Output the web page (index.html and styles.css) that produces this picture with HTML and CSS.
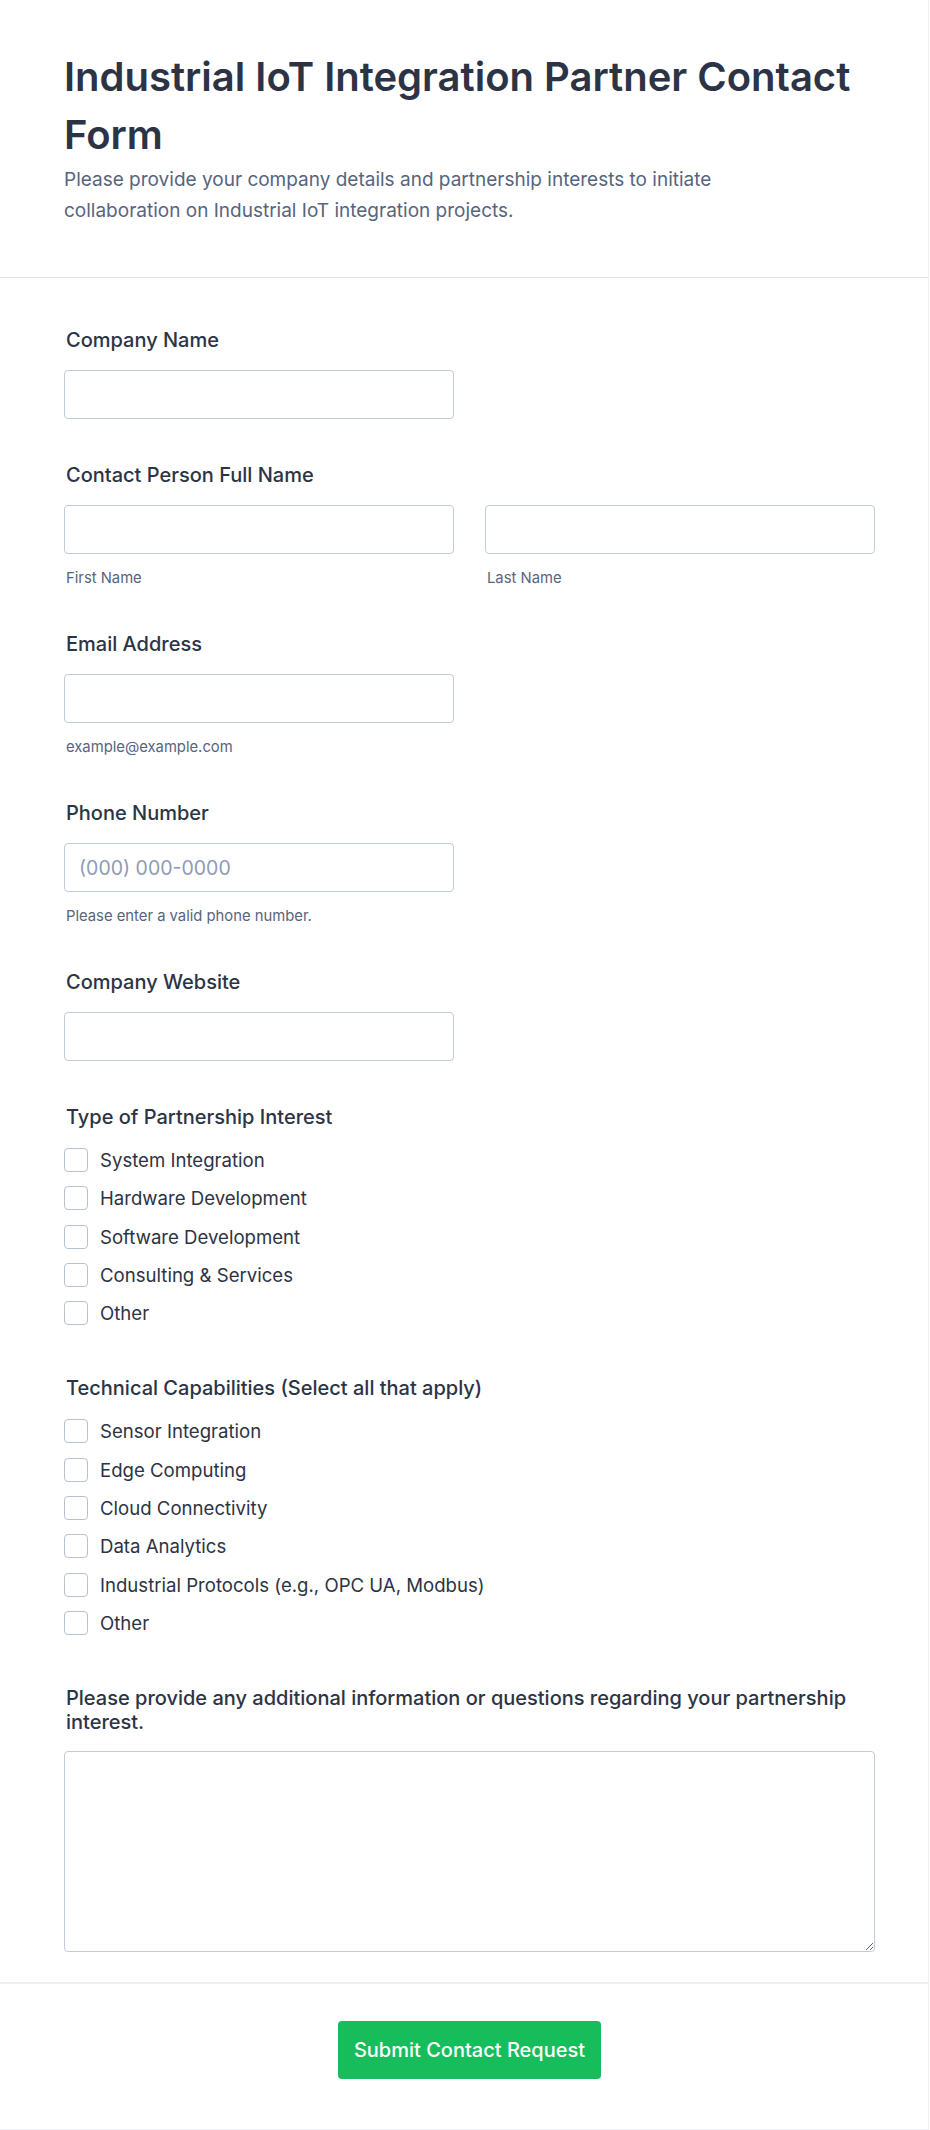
FILE: index.html
```html
<!DOCTYPE html>
<html lang="en">
<head>
<meta charset="utf-8">
<title>Industrial IoT Integration Partner Contact Form</title>
<link rel="stylesheet" href="styles.css">
</head>
<body>
<div class="page">
  <header class="form-header">
    <h1 class="form-title">Industrial IoT Integration Partner Contact Form</h1>
    <p class="form-subtitle">Please provide your company details and partnership interests to initiate collaboration on Industrial IoT integration projects.</p>
  </header>

  <form class="form-body">
    <div class="field">
      <label class="field-label">Company Name</label>
      <div class="cols">
        <input class="input" type="text">
      </div>
    </div>

    <div class="field">
      <label class="field-label">Contact Person Full Name</label>
      <div class="cols">
        <div class="col">
          <input class="input" type="text">
          <span class="sublabel">First Name</span>
        </div>
        <div class="col">
          <input class="input" type="text">
          <span class="sublabel">Last Name</span>
        </div>
      </div>
    </div>

    <div class="field">
      <label class="field-label">Email Address</label>
      <div class="cols">
        <div class="col">
          <input class="input" type="email">
          <span class="sublabel">example@example.com</span>
        </div>
      </div>
    </div>

    <div class="field">
      <label class="field-label">Phone Number</label>
      <div class="cols">
        <div class="col">
          <input class="input" type="tel" placeholder="(000) 000-0000">
          <span class="sublabel">Please enter a valid phone number.</span>
        </div>
      </div>
    </div>

    <div class="field">
      <label class="field-label">Company Website</label>
      <div class="cols">
        <input class="input" type="url">
      </div>
    </div>

    <div class="field field-checks">
      <div class="field-label">Type of Partnership Interest</div>
      <div class="check-list">
        <label class="check"><input class="box" type="checkbox"><span>System Integration</span></label>
        <label class="check"><input class="box" type="checkbox"><span>Hardware Development</span></label>
        <label class="check"><input class="box" type="checkbox"><span>Software Development</span></label>
        <label class="check"><input class="box" type="checkbox"><span>Consulting &amp; Services</span></label>
        <label class="check"><input class="box" type="checkbox"><span>Other</span></label>
      </div>
    </div>

    <div class="field field-checks">
      <div class="field-label">Technical Capabilities (Select all that apply)</div>
      <div class="check-list">
        <label class="check"><input class="box" type="checkbox"><span>Sensor Integration</span></label>
        <label class="check"><input class="box" type="checkbox"><span>Edge Computing</span></label>
        <label class="check"><input class="box" type="checkbox"><span>Cloud Connectivity</span></label>
        <label class="check"><input class="box" type="checkbox"><span>Data Analytics</span></label>
        <label class="check"><input class="box" type="checkbox"><span>Industrial Protocols (e.g., OPC UA, Modbus)</span></label>
        <label class="check"><input class="box" type="checkbox"><span>Other</span></label>
      </div>
    </div>

    <div class="field field-last">
      <label class="field-label">Please provide any additional information or questions regarding your partnership interest.</label>
      <textarea class="textarea"></textarea>
    </div>
  </form>

  <div class="form-footer">
    <button class="submit" type="button">Submit Contact Request</button>
  </div>
</div>
</body>
</html>
```

FILE: styles.css
```css
* {
  box-sizing: border-box;
}

html, body {
  margin: 0;
  padding: 0;
  background: #ffffff;
}

body {
  font-family: Inter, "Noto Sans", "Liberation Sans", sans-serif;
  color: #2c3345;
}

.page {
  width: 929px;
  min-height: 2129px;
  background: #ffffff;
  border-right: 1px solid #eef0f5;
  border-bottom: 1px solid #eef0f5;
}

.form-header {
  padding: 48px 64px 51px 64px;
  border-bottom: 1px solid #dfe1ea;
}

.form-title {
  margin: 0;
  font-size: 40px;
  line-height: 58px;
  font-weight: 600;
  color: #2c3345;
}

.form-subtitle {
  margin: 0;
  max-width: 720px;
  font-size: 19px;
  line-height: 31px;
  font-weight: 400;
  color: #57647e;
}

.form-body {
  padding: 50px 53px 0 64px;
}

.field {
  margin-bottom: 44px;
}

.field-last {
  margin-bottom: 30px;
}

.field-label {
  display: block;
  padding-left: 2px;
  margin-bottom: 18px;
  font-size: 20px;
  line-height: 24px;
  font-weight: 500;
  color: #2c3345;
}

.field-checks .field-label {
  margin-bottom: 19px;
}

.field-last .field-label {
  margin-bottom: 17px;
}

.cols {
  display: grid;
  grid-template-columns: 1fr 1fr;
  column-gap: 31px;
}

.col {
  display: flex;
  flex-direction: column;
}

.input {
  display: block;
  width: 100%;
  height: 49px;
  margin: 0;
  padding: 0 14px;
  border: 1px solid #c3cad8;
  border-radius: 4px;
  background: #ffffff;
  font-family: inherit;
  font-size: 19.5px;
  color: #2c3345;
}

.input::placeholder {
  color: #8f9bb3;
}

.sublabel {
  display: block;
  margin-top: 14px;
  padding-left: 2px;
  font-size: 14.8px;
  line-height: 20px;
  color: #57647e;
}

.check-list {
  display: flex;
  flex-direction: column;
  gap: 14.33px;
  padding-bottom: 7px;
}

.check {
  display: flex;
  align-items: center;
  gap: 12px;
  height: 24px;
  font-size: 18.6px;
  line-height: 24px;
  color: #2c3345;
}

.box {
  appearance: none;
  -webkit-appearance: none;
  flex: 0 0 auto;
  width: 24px;
  height: 24px;
  margin: 0;
  border: 1px solid #b9c0cf;
  border-radius: 4px;
  background: #ffffff;
}

.textarea {
  display: block;
  width: 100%;
  height: 201px;
  margin: 0;
  padding: 10px 14px;
  border: 1px solid #c3cad8;
  border-radius: 4px;
  background: #ffffff;
  font-family: inherit;
  font-size: 18px;
  resize: both;
}

.form-footer {
  border-top: 2px solid #eceef5;
  padding: 37px 53px 50px 64px;
  display: flex;
  justify-content: center;
}

.submit {
  height: 58px;
  padding: 0 16px;
  border: none;
  border-radius: 4px;
  background: #18bd5b;
  color: #ffffff;
  font-family: inherit;
  font-size: 20px;
  font-weight: 500;
  cursor: pointer;
}
```
